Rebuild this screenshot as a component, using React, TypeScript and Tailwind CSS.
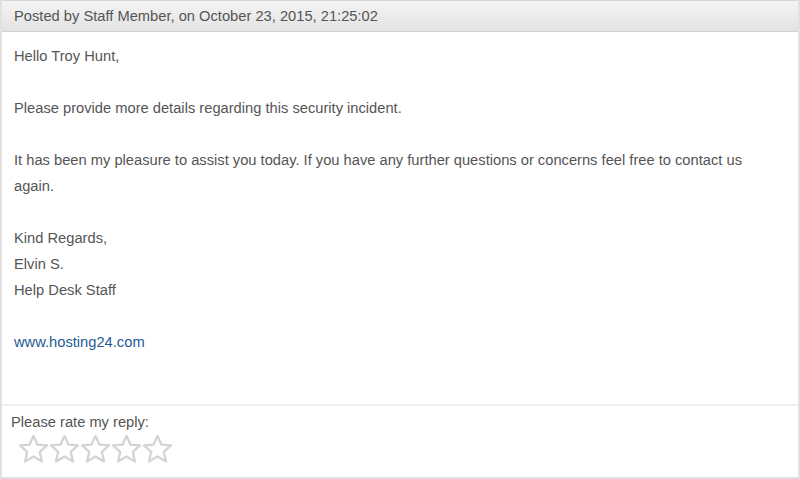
import React from "react";

const Star = () => (
  <svg width="31" height="31" viewBox="0 0 30 30" className="block">
    <defs>
      <filter id="sblur" x="-20%" y="-20%" width="140%" height="140%">
        <feGaussianBlur stdDeviation="0.7" />
      </filter>
    </defs>
    <path
      d="M15 1.8 L18.8 10.2 L28 11.1 L21.1 17.3 L23.2 26.6 L15 21.7 L6.8 26.6 L8.9 17.3 L2 11.1 L11.2 10.2 Z"
      fill="#ffffff"
      stroke="#d4d4d4"
      strokeWidth="2.2"
      strokeLinejoin="round"
      filter="url(#sblur)"
    />
  </svg>
);

export default function App() {
  return (
    <div
      className="w-[800px] h-[479px] bg-white border-t border-x-2 border-b-2 border-[#e1e1e1] border-t-[#d6d6d6] flex flex-col text-[14.7px] text-[#555555]"
      style={{ fontFamily: '"Liberation Sans", Arial, sans-serif' }}
    >
      <div className="h-[31px] shrink-0 bg-gradient-to-b from-[#f4f4f4] to-[#e3e3e3] border-b border-[#d2d2d2] px-[12px] flex items-center leading-[20px]">
        Posted by Staff Member, on October 23, 2015, 21:25:02
      </div>
      <div className="flex-1 px-[12px] pt-[11px] leading-[26px]">
        <p>Hello Troy Hunt,</p>
        <p className="mt-[26px]">Please provide more details regarding this security incident.</p>
        <p className="mt-[26px]">
          It has been my pleasure to assist you today. If you have any further questions or concerns feel free to contact us again.
        </p>
        <p className="mt-[26px]">
          Kind Regards,
          <br />
          Elvin S.
          <br />
          Help Desk Staff
        </p>
        <p className="mt-[26px]">
          <a className="text-[#1f5b94]">www.hosting24.com</a>
        </p>
      </div>
      <div className="h-[73px] shrink-0 border-t-2 border-[#f0f0f0] pl-[9px] pt-[6px]">
        <div className="leading-[20px]">Please rate my reply:</div>
        <div className="flex gap-0 pl-[7px] pt-[2px]">
          <Star />
          <Star />
          <Star />
          <Star />
          <Star />
        </div>
      </div>
    </div>
  );
}
